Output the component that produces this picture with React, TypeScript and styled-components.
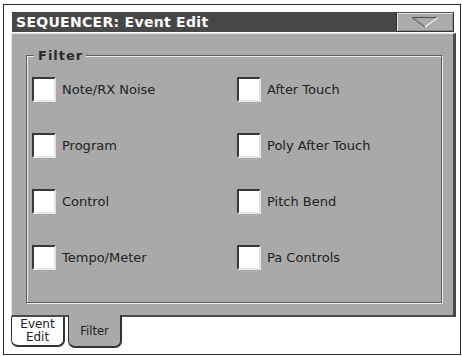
import styled, { createGlobalStyle } from "styled-components";

const GlobalStyle = createGlobalStyle`
  html, body {
    margin: 0;
    padding: 0;
    background: #fff;
  }
  body {
    font-family: "DejaVu Sans", "Liberation Sans", sans-serif;
  }
`;

const Screen = styled.div`
  width: 462px;
  height: 356px;
  padding: 4px 0 0 3px;
  box-sizing: border-box;
`;

const Frame = styled.div`
  width: 458px;
  height: 351px;
  box-sizing: border-box;
  border: 1px solid #2e2e2e;
  padding: 7px 4px 0 7px;
  display: flex;
  flex-direction: column;
`;

const TitleRow = styled.div`
  display: flex;
  height: 20px;
  margin-left: 1px;
  width: 442px;
`;

const Title = styled.div`
  flex: 1;
  background: #474747;
  color: #fff;
  font-weight: bold;
  font-size: 14px;
  letter-spacing: 0.3px;
  line-height: 20px;
  padding-left: 4px;
`;

const MenuButton = styled.div`
  width: 58px;
  box-sizing: border-box;
  border: 1px solid #333;
  border-top-color: #555;
  background: #ababab;
  box-shadow: inset 1px 1px 0 #e2e2e2, inset -1px -1px 0 #8a8a8a;
  display: flex;
  align-items: center;
  justify-content: center;
`;

const Panel = styled.div`
  margin-top: 1px;
  width: 445px;
  height: 284px;
  box-sizing: border-box;
  background: #a9a9a9;
  border-top: 1px solid #e4e4e4;
  border-left: 1px solid #e4e4e4;
  border-right: 3px solid #4a4a4a;
  border-bottom: 2px solid #4a4a4a;
  padding: 21px 0 0 14px;
`;

const GroupBox = styled.div`
  position: relative;
  width: 416px;
  height: 248px;
  box-sizing: border-box;
  border: 1px solid #5c5c5c;
  box-shadow: 1px 1px 0 #ececec, inset 1px 1px 0 #ececec;
  padding: 21px 0 0 5px;
`;

const Legend = styled.span`
  position: absolute;
  top: -8px;
  left: 7px;
  padding: 0 3px 0 4px;
  background: #a9a9a9;
  color: #2a2a2a;
  font-weight: bold;
  font-size: 13px;
  letter-spacing: 1px;
  line-height: 15px;
`;

const Grid = styled.div`
  display: grid;
  grid-template-columns: 205px 205px;
  grid-auto-rows: 56px;
`;

const Option = styled.div`
  display: flex;
  align-items: flex-start;
  gap: 6px;
`;

const Box = styled.div<{ $checked?: boolean }>`
  width: 24px;
  height: 25px;
  box-sizing: border-box;
  border: 2px solid;
  border-color: #383838 #e6e6e6 #e6e6e6 #383838;
  background: ${(p) => (p.$checked ? "#222" : "#fff")};
`;

const Label = styled.span`
  font-size: 13px;
  color: #222;
  line-height: 25px;
`;

const TabRow = styled.div`
  display: flex;
  align-items: flex-start;
  gap: 3px;
`;

const Tab = styled.div<{ $active?: boolean }>`
  width: 54px;
  box-sizing: border-box;
  height: ${(p) => (p.$active ? "33px" : "30px")};
  margin-top: ${(p) => (p.$active ? "-2px" : "0")};
  position: relative;
  background: ${(p) => (p.$active ? "#a9a9a9" : "#fff")};
  border: 1px solid #333;
  border-top: none;
  border-right-width: 2px;
  border-bottom-width: 2px;
  border-radius: 0 0 7px 7px;
  display: flex;
  flex-direction: column;
  align-items: center;
  justify-content: center;
  text-align: center;
  font-size: ${(p) => (p.$active ? "11.5px" : "12px")};
  line-height: 13px;
  color: #222;
  padding-top: ${(p) => (p.$active ? "1px" : "0")};
`;

const options = [
  ["Note/RX Noise", "After Touch"],
  ["Program", "Poly After Touch"],
  ["Control", "Pitch Bend"],
  ["Tempo/Meter", "Pa Controls"],
];

export default function App() {
  return (
    <>
      <GlobalStyle />
      <Screen>
        <Frame>
          <TitleRow>
            <Title>SEQUENCER: Event Edit</Title>
            <MenuButton>
              <svg width="28" height="12" viewBox="0 0 28 12">
                <polyline points="1,1.5 27,1.5" stroke="#555" strokeWidth="1.2" fill="none" />
                <polyline points="1,1.5 14,11" stroke="#666" strokeWidth="1.2" fill="none" />
                <polyline points="14,11 27,1.5" stroke="#efefef" strokeWidth="1.4" fill="none" />
              </svg>
            </MenuButton>
          </TitleRow>
          <Panel>
            <GroupBox>
              <Legend>Filter</Legend>
              <Grid>
                {options.flat().map((o) => (
                  <Option key={o}>
                    <Box />
                    <Label>{o}</Label>
                  </Option>
                ))}
              </Grid>
            </GroupBox>
          </Panel>
          <TabRow>
            <Tab>
              <span>Event</span>
              <span>Edit</span>
            </Tab>
            <Tab $active>Filter</Tab>
          </TabRow>
        </Frame>
      </Screen>
    </>
  );
}
